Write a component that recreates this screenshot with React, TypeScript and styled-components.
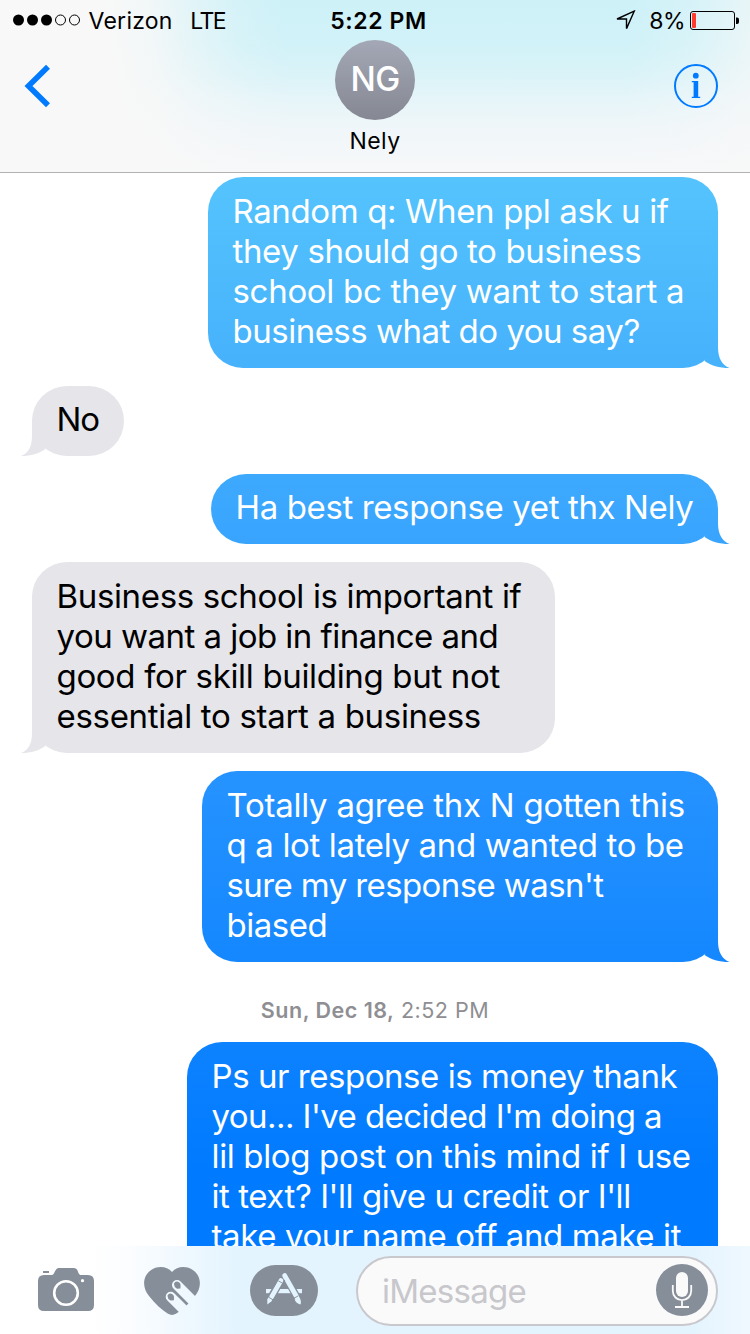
import React from "react";
import styled, { createGlobalStyle } from "styled-components";

const GlobalStyle = createGlobalStyle`
  * { box-sizing: border-box; }
  html, body, #root { height: 100%; }
  body {
    margin: 0;
    background: #fff;
    font-family: Inter, "Liberation Sans", sans-serif;
    color: #000;
  }
`;

const Screen = styled.div`
  display: flex;
  flex-direction: column;
  width: 750px;
  height: 1334px;
  overflow: hidden;
  background: #fff;
`;

const Header = styled.header`
  flex: none;
  height: 173px;
  border-bottom: 1px solid #b2b2b4;
  background:
    linear-gradient(84deg, #f8f8f8 120px, rgba(248, 248, 248, 0.85) 165px, rgba(248, 248, 248, 0.5) 205px, rgba(248, 248, 248, 0.15) 255px, rgba(248, 248, 248, 0) 300px),
    linear-gradient(96deg, rgba(248, 248, 248, 0) 630px, rgba(248, 248, 248, 0.2) 690px, rgba(248, 248, 248, 0.65) 750px),
    linear-gradient(#cef1f8 0, #d1f2f8 45px, #daf3f8 75px, #e6f5f9 100px, #f0f6f9 130px, #f6f8f9 165px);
`;

const StatusBar = styled.div`
  display: grid;
  grid-template-columns: 1fr auto 1fr;
  align-items: center;
  height: 40px;
  padding: 0 10px 0 13px;
  font-size: 23px;
  line-height: 40px;
`;

const StatusGroup = styled.div<{ $end?: boolean }>`
  display: flex;
  align-items: center;
  justify-content: ${(p) => (p.$end ? "flex-end" : "flex-start")};
  white-space: nowrap;
`;

const StatusText = styled.span<{ $ls?: number; $ml?: number; $bold?: boolean }>`
  letter-spacing: ${(p) => p.$ls ?? 0}px;
  margin-left: ${(p) => p.$ml ?? 0}px;
  padding-top: 2px;
  line-height: 38px;
  font-weight: ${(p) => (p.$bold ? 600 : 400)};
`;

const Battery = styled.svg`
  margin: 1px 0 0 5px;
`;

const NavBar = styled.div`
  display: grid;
  grid-template-columns: 1fr auto 1fr;
  height: 132px;
  padding: 0 32px 0 24px;
`;

const NavSide = styled.div<{ $end?: boolean }>`
  display: flex;
  justify-content: ${(p) => (p.$end ? "flex-end" : "flex-start")};
  padding-top: 24px;
`;

const Contact = styled.div`
  display: flex;
  flex-direction: column;
  align-items: center;
  margin-left: 8px;
`;

const Avatar = styled.div`
  display: flex;
  align-items: center;
  justify-content: center;
  width: 80px;
  height: 80px;
  padding-bottom: 2px;
  border-radius: 50%;
  background: linear-gradient(#a4a8b6, #858892);
  color: #fff;
  font-size: 33.5px;
  font-weight: 500;
  letter-spacing: -0.8px;
`;

const ContactName = styled.div`
  margin-top: 6px;
  font-size: 23px;
  line-height: 30px;
  letter-spacing: 0.4px;
`;

const Thread = styled.main`
  display: flex;
  flex-direction: column;
  gap: 18px;
  height: 1073px;
  padding: 4px 32px 0;
  overflow: hidden;
`;

const Bubble = styled.div<{ $mine?: boolean; $w: number; $tall?: boolean; $minH?: number }>`
  position: relative;
  flex: none;
  align-self: ${(p) => (p.$mine ? "flex-end" : "flex-start")};
  width: ${(p) => p.$w}px;
  min-height: ${(p) => p.$minH ?? 0}px;
  padding: ${(p) => (p.$tall ? "14px 0 17px 24.5px" : "13px 0 17px 24.5px")};
  border-radius: 35px;
  color: ${(p) => (p.$mine ? "#fff" : "#000")};
  background: ${(p) =>
    p.$mine
      ? "linear-gradient(#55c4fd 173px, #46b1fc 370px, #39a5fe 530px, #2391ff 800px, #0d82ff 1050px, #007aff 1170px) fixed"
      : "#e5e5ea"};

  &::after {
    content: "";
    position: absolute;
    bottom: 0;
    ${(p) => (p.$mine ? "right: -12px;" : "left: -11px;")}
    width: 27px;
    height: 36px;
    background: inherit;
    clip-path: ${(p) =>
      p.$mine
        ? 'path("M15 0 V15 C15 26 19 33 26.5 36 C16 36 8 33.5 1.5 29 Z")'
        : 'path("M11 0 V15 C11 26 8 33 0 36 C10 36 18 33.5 24.5 29 Z")'};
  }
`;

const Line = styled.div<{ $ls?: number }>`
  font-size: 33px;
  line-height: 40px;
  white-space: nowrap;
  letter-spacing: ${(p) => p.$ls ?? 0}px;
`;

const DateStamp = styled.div`
  flex: none;
  height: 44px;
  padding-top: 17px;
  text-align: center;
  color: #8e8e93;
  font-size: 21.5px;
  line-height: 26px;
  letter-spacing: 0.5px;

  b { font-weight: 600; }
`;

const Toolbar = styled.footer`
  display: flex;
  align-items: center;
  flex: none;
  height: 88px;
  padding: 0 32px 0 38px;
  background: linear-gradient(90deg, #fff 90px, #fbfdff 130px, #e4f4fe 235px, #e3f4fe 690px, #f0f8ff 750px);
`;

const ToolIcon = styled.svg<{ $ml?: number; $mt?: number }>`
  flex: none;
  margin-left: ${(p) => p.$ml ?? 0}px;
  margin-top: ${(p) => p.$mt ?? 0}px;
`;

const Field = styled.div`
  display: flex;
  align-items: center;
  justify-content: space-between;
  flex: 1;
  height: 70px;
  margin: 2px 0 0 38px;
  padding: 0 8px 0 24px;
  border: 2px solid #c8c8cd;
  border-radius: 35px;
  background: #fafafa;
  color: #c7c7cc;
  font-size: 33px;
  letter-spacing: -0.75px;
`;

const MicButton = styled.svg`
  margin-top: -3px;
`;

type Message = { mine?: boolean; width: number; minHeight?: number; lines: [string, number][] };

const first: Message[] = [
  { mine: true, width: 510, lines: [["Random q: When ppl ask u if", -0.38], ["they should go to business", -0.35], ["school bc they want to start a", -0.3], ["business what do you say?", -0.5]] },
  { width: 92, lines: [["No", -1]] },
  { mine: true, width: 507, lines: [["Ha best response yet thx Nely", -0.38]] },
  { width: 523, lines: [["Business school is important if", -0.35], ["you want a job in finance and", -0.52], ["good for skill building but not", -0.33], ["essential to start a business", -0.31]] },
  { mine: true, width: 516, lines: [["Totally agree thx N gotten this", -0.26], ["q a lot lately and wanted to be", -0.35], ["sure my response wasn't", -0.6], ["biased", -0.5]] },
];

const second: Message[] = [
  { mine: true, width: 531, minHeight: 270, lines: [["Ps ur response is money thank", -0.45], ["you... I've decided I'm doing a", -0.56], ["lil blog post on this mind if I use", -0.35], ["it text? I'll give u credit or I'll", -0.44], ["take your name off and make it", -0.4]] },
];

const MessageBubble = ({ m }: { m: Message }) => (
  <Bubble $mine={m.mine} $w={m.width} $minH={m.minHeight} $tall={m.lines.length > 1}>
    {m.lines.map(([text, ls]) => (
      <Line key={text} $ls={ls}>{text}</Line>
    ))}
  </Bubble>
);

export default function App() {
  return (
    <Screen>
      <GlobalStyle />
      <Header>
        <StatusBar>
          <StatusGroup>
            <svg width="68" height="12" viewBox="0 0 68 12">
              <circle cx="5.5" cy="6" r="5.5" />
              <circle cx="19.5" cy="6" r="5.5" />
              <circle cx="33.5" cy="6" r="5.5" />
              <circle cx="47.5" cy="6" r="5" fill="none" stroke="#000" />
              <circle cx="61.5" cy="6" r="5" fill="none" stroke="#000" />
            </svg>
            <StatusText $ml={7.5} $ls={0.25}>Verizon</StatusText>
            <StatusText $ml={17.5} $ls={-1.5}>LTE</StatusText>
          </StatusGroup>
          <StatusText $bold $ls={0.6} $ml={4}>5:22 PM</StatusText>
          <StatusGroup $end>
            <svg width="21" height="21" viewBox="0 0 21 21">
              <path d="M19.200 1.200 L2 9 H11.500 V18.600 Z" fill="none" stroke="#000" strokeWidth="1.4" />
            </svg>
            <StatusText $ml={13} $ls={-0.5}>8%</StatusText>
            <Battery width="50" height="20" viewBox="0 0 50 20">
              <rect x="0.5" y="0.5" width="44" height="18" rx="2.5" fill="none" stroke="#000" />
              <rect x="2" y="2" width="4" height="15" rx="1" fill="#ff3b30" />
              <path d="M46 6.500 h1 q2 0 2 2 v2.500 q0 2 -2 2 h-1 z" />
            </Battery>
          </StatusGroup>
        </StatusBar>
        <NavBar>
          <NavSide>
            <svg width="28" height="44" viewBox="0 0 28 44">
              <path d="M24 2.8 L4.5 22 L24 41.2" fill="none" stroke="#007aff" strokeWidth="5.6" />
            </svg>
          </NavSide>
          <Contact>
            <Avatar>NG</Avatar>
            <ContactName>Nely</ContactName>
          </Contact>
          <NavSide $end>
            <svg width="44" height="44" viewBox="0 0 44 44">
              <circle cx="22" cy="22" r="21" fill="none" stroke="#007aff" strokeWidth="2" />
              <circle cx="21.8" cy="11.7" r="2.9" fill="#007aff" />
              <path d="M17.800 17 H24.200 V32.800 H26.200 V34 H17.800 V32.800 H19.600 V18.200 H17.800 Z" fill="#007aff" />
            </svg>
          </NavSide>
        </NavBar>
      </Header>
      <Thread>
        {first.map((m) => <MessageBubble key={m.lines[0][0]} m={m} />)}
        <DateStamp><b>Sun, Dec 18,</b> 2:52 PM</DateStamp>
        {second.map((m) => <MessageBubble key={m.lines[0][0]} m={m} />)}
      </Thread>
      <Toolbar>
        <ToolIcon width="56" height="44" viewBox="0 0 56 44">
          <path fill="#868e99" d="M6 7 H14 C16 7 16.5 3 18.5 1 Q19.5 0 21 0 H36 Q38 0 39 1.5 C40.5 4 40.5 7 43 7 H50 Q56 7 56 13 V37 Q56 43 50 43 H6 Q0 43 0 37 V13 Q0 7 6 7 Z" />
          <rect x="5" y="3" width="6" height="2" fill="#868e99" />
          <circle cx="28" cy="25" r="11.8" fill="none" stroke="#fff" strokeWidth="2.6" />
          <circle cx="44.5" cy="12.7" r="1.6" fill="#fff" />
        </ToolIcon>
        <ToolIcon $ml={50} $mt={2} width="56" height="48" viewBox="0 0 56 48">
          <mask id="fingers" maskUnits="userSpaceOnUse" x="-2" y="-2" width="62" height="54">
            <rect x="-2" y="-2" width="62" height="54" fill="#fff" />
            <path d="M33 18 L63 48 M26.700 29.700 L50 53" stroke="#000" strokeWidth="10" strokeLinecap="round" />
          </mask>
          <path
            fill="#868e99"
            mask="url(#fingers)"
            d="M28 5 C33 -1 43 -1.500 49.500 3.500 C58 10 57.500 21 51 29 C45 37 38 43 32 46.800 Q28 49 24 46.800 C18 43 11 37 5 29 C-1.500 21 -2 10 6.500 3.500 C13 -1.500 23 -1 28 5 Z"
          />
          <g fill="#868e99">
            <path d="M30 17 Q30 15 33 14.500 Q36.300 15 36.600 18 L36.400 21.500 L33 21.700 Q30 20 30 17 Z" />
            <path d="M23.500 29 Q23.500 27 26.500 26.500 Q29.800 27 30 30 L29.900 33.300 L26.500 33.600 Q23.500 32 23.500 29 Z" />
          </g>
        </ToolIcon>
        <ToolIcon $ml={50} $mt={1} width="68" height="51" viewBox="0 0 68 51">
          <rect width="68" height="51" rx="25.500" fill="#868e99" />
          <rect x="16" y="24" width="36" height="4.200" fill="#e3f4fe" />
          <path d="M34.500 10 L48 34" stroke="#868e99" strokeWidth="7.500" />
          <path d="M34.600 10.500 L46.800 32" stroke="#e3f4fe" strokeWidth="4.800" strokeLinecap="round" />
          <path d="M44.600 34.500 L49.200 32 Q51.800 36 50.500 39.600 Q46 38.500 44.600 34.500 Z" fill="#e3f4fe" />
          <path d="M32 13.500 L19 36" stroke="#868e99" strokeWidth="7.500" />
          <path d="M31 15.500 L21.500 32" stroke="#e3f4fe" strokeWidth="4.600" strokeLinecap="round" />
          <path d="M18.600 32 L22.600 34.300 L21.500 36.200 L17.300 39.500 L17.300 34.500 Z" fill="#e3f4fe" />
          <path d="M28.300 15.800 L32.500 18.200 M18.500 32.200 L23 34.800 M43.500 33.500 L48.500 30.700" stroke="#868e99" strokeWidth="0.900" />
        </ToolIcon>
        <Field>
          <span>iMessage</span>
          <MicButton width="52" height="52" viewBox="0 0 52 52">
            <circle cx="26" cy="26" r="26" fill="#868e99" />
            <rect x="20" y="8" width="12" height="25" rx="6" fill="#fafafa" />
            <path d="M16.800 21 V27 A9.200 9.200 0 0 0 35.200 27 V21 M26 36.500 V43 M19 43 H33" fill="none" stroke="#fafafa" strokeWidth="1.800" />
          </MicButton>
        </Field>
      </Toolbar>
    </Screen>
  );
}
